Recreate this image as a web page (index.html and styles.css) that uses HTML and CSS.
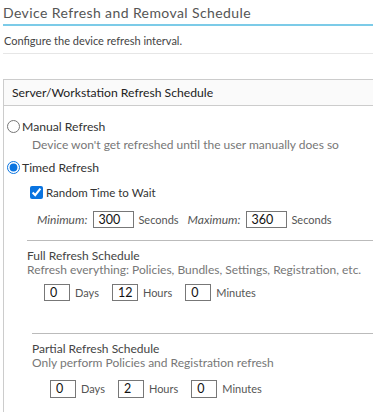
FILE: index.html
```html
<!DOCTYPE html>
<html>
<head>
<meta charset="utf-8">
<link rel="stylesheet" href="styles.css">
</head>
<body>
<div class="page">
  <h1 class="page-title">Device Refresh and Removal Schedule</h1>
  <p class="page-desc">Configure the device refresh interval.</p>

  <section class="panel">
    <div class="panel-head">Server/Workstation Refresh Schedule</div>
    <div class="panel-body">
      <label class="opt">
        <input type="radio" name="mode" class="radio">
        <span>Manual Refresh</span>
      </label>
      <div class="opt-desc">Device won't get refreshed until the user manually does so</div>
      <label class="opt opt-timed">
        <input type="radio" name="mode" class="radio" checked>
        <span>Timed Refresh</span>
      </label>
      <label class="check-row">
        <input type="checkbox" class="check" checked>
        <span>Random Time to Wait</span>
      </label>
      <div class="range-row">
        <span class="range-label">Minimum:</span>
        <input type="text" class="num num-wide" value="300">
        <span class="unit">Seconds</span>
        <span class="range-label range-max">Maximum:</span>
        <input type="text" class="num num-wide" value="360">
        <span class="unit">Seconds</span>
      </div>

      <div class="sched sched-full">
        <div class="sched-title">Full Refresh Schedule</div>
        <div class="sched-desc">Refresh everything: Policies, Bundles, Settings, Registration, etc.</div>
        <div class="dhm-row">
          <input type="text" class="num" value="0"><span class="unit">Days</span>
          <input type="text" class="num" value="12"><span class="unit">Hours</span>
          <input type="text" class="num" value="0"><span class="unit">Minutes</span>
        </div>
      </div>

      <div class="sched sched-partial">
        <div class="sched-title">Partial Refresh Schedule</div>
        <div class="sched-desc">Only perform Policies and Registration refresh</div>
        <div class="dhm-row">
          <input type="text" class="num" value="0"><span class="unit">Days</span>
          <input type="text" class="num" value="2"><span class="unit">Hours</span>
          <input type="text" class="num" value="0"><span class="unit">Minutes</span>
        </div>
      </div>
    </div>
  </section>
</div>
</body>
</html>
```
FILE: styles.css
```css
html, body {
  margin: 0;
  padding: 0;
  background: #fff;
  overflow: hidden;
}
body {
  font-family: Lato, "Open Sans", sans-serif;
  font-size: 12px;
  color: #333;
}
.page {
  padding-left: 3px;
}
.page-title {
  margin: 0;
  padding: 4px 0 2px 0;
  font-size: 14px;
  line-height: 18px;
  font-weight: normal;
  letter-spacing: 0.4px;
  color: #555;
  border-bottom: 2px solid #7ccbe8;
}
.page-desc {
  margin: 0;
  padding: 7px 0 4px 1px;
  line-height: 16px;
  font-size: 11px;
  color: #444;
  border-bottom: 1px solid #e6e6e6;
}
.panel {
  margin-top: 25px;
  border-top: 1px solid #ccc;
  border-left: 1px solid #ccc;
  min-height: 400px;
}
.panel-head {
  background: #fafafa;
  height: 25px;
  line-height: 25px;
  padding-left: 8px;
  font-size: 12.2px;
  color: #222;
  border-bottom: 1px solid #ccc;
}
.panel-body {
  padding-top: 12px;
}
.opt {
  display: flex;
  align-items: center;
  height: 16px;
  font-size: 12.2px;
  color: #333;
}
.radio {
  margin: 0 2px 0 3px;
  width: 13px;
  height: 13px;
  accent-color: #0a74e0;
}
.opt-desc {
  margin-top: 3px;
  padding-left: 28px;
  line-height: 16px;
  color: #777;
}
.opt-timed {
  margin-top: 6px;
}
.check-row {
  display: flex;
  align-items: center;
  height: 16px;
  margin-top: 9px;
  padding-left: 26px;
  font-size: 11.5px;
  color: #333;
}
.check {
  margin: 0 3px 0 0;
  width: 13px;
  height: 13px;
  accent-color: #0a74e0;
}
.range-row {
  display: flex;
  align-items: center;
  height: 17px;
  margin-top: 11px;
  padding-left: 33px;
}
.range-label {
  font-style: italic;
  color: #555;
  margin-right: 6px;
}
.range-max {
  margin-left: 9px;
}
.num {
  box-sizing: border-box;
  width: 26px;
  height: 17px;
  margin: 0;
  padding: 0 0 0 5px;
  border: 1px solid #777;
  font-family: inherit;
  font-size: 12.5px;
  color: #111;
  background: #fff;
  outline: none;
}
.num-wide {
  width: 41px;
  padding-left: 4px;
}
.unit {
  margin-left: 4px;
  font-size: 11px;
  color: #555;
}
.sched {
  margin-top: 12px;
  border-top: 1px solid #bbb;
  padding-top: 8px;
}
.sched-full {
  margin-left: 23px;
}
.sched-partial {
  margin-left: 28px;
  margin-top: 32px;
}
.sched-title {
  line-height: 14px;
  color: #444;
}
.sched-desc {
  line-height: 14px;
  color: #777;
}
.dhm-row {
  display: flex;
  align-items: center;
  height: 17px;
  margin-top: 7px;
  padding-left: 17px;
}
.dhm-row .unit {
  margin-left: 5px;
  margin-right: 13px;
}
.sched-partial .dhm-row {
  margin-top: 10px;
  padding-left: 18px;
}
.sched-partial .num {
  height: 18px;
}
```
